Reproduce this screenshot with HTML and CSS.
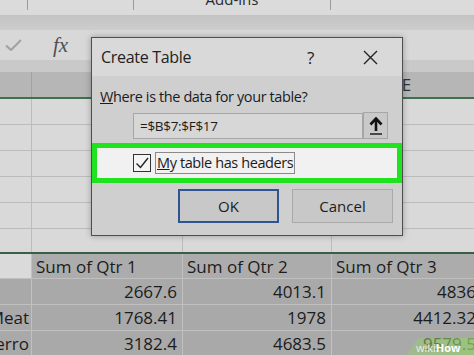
FILE: index.html
```html
<!DOCTYPE html>
<html lang="en">
  <head>
    <meta charset="UTF-8" />
    <meta name="viewport" content="width=device-width, initial-scale=1.0" />
    <title>Create Table</title>
    <link rel="stylesheet" href="styles.css">
  </head>
  <body>
    <div class="sheet">
      <div class="ribbon">
        <div class="tab tab-a"></div>
        <div class="tab tab-b"></div>
        <div class="tab tab-c"><span>Add-ins</span></div>
        <div class="tab tab-d"></div>
      </div>
      <div class="ribbon-shade"></div>
      <div class="formula-bar">
        <svg class="fb-check" width="17" height="12" viewBox="0 0 17 12">
          <path d="M1 6.5 L6 11 L16 1" fill="none" stroke="#a3a3a3" stroke-width="2.2" />
        </svg>
        <span class="fb-fx">fx</span>
      </div>
      <div class="strip"></div>
      <div class="col-headers">
        <div class="colh"></div>
        <div class="colh"></div>
        <div class="colh"></div>
        <div class="colh">E</div>
      </div>

      <div class="cells">
        <div class="row"><div></div><div></div><div></div><div></div></div>
        <div class="row"><div></div><div></div><div></div><div></div></div>
        <div class="row"><div></div><div></div><div></div><div></div></div>
        <div class="row"><div></div><div></div><div></div><div></div></div>
        <div class="row"><div></div><div></div><div></div><div></div></div>
        <div class="row row-last"><div></div><div></div><div></div><div></div></div>
      </div>

      <div class="pivot">
        <div class="prow prow-head">
          <div class="pcell pcell-blank"></div>
          <div class="pcell">Sum of Qtr 1</div>
          <div class="pcell">Sum of Qtr 2</div>
          <div class="pcell">Sum of Qtr 3</div>
        </div>
        <div class="prow">
          <div class="pcell label"></div>
          <div class="pcell num">2667.6</div>
          <div class="pcell num">4013.1</div>
          <div class="pcell num">4836</div>
        </div>
        <div class="prow">
          <div class="pcell label">Meat</div>
          <div class="pcell num">1768.41</div>
          <div class="pcell num">1978</div>
          <div class="pcell num">4412.32</div>
        </div>
        <div class="prow">
          <div class="pcell label">Ferro</div>
          <div class="pcell num">3182.4</div>
          <div class="pcell num">4683.5</div>
          <div class="pcell num">9579.5</div>
        </div>
      </div>
    </div>

    <div class="dialog">
      <div class="dialog-title">
        <span class="title-text">Create Table</span>
        <span class="title-help">?</span>
        <svg class="title-close" width="15" height="15" viewBox="0 0 15 15">
          <path d="M1 1 L14 14 M14 1 L1 14" stroke="#222" stroke-width="1.4" />
        </svg>
      </div>
      <div class="dialog-body">
        <div class="prompt"><u>W</u>here is the data for your table?</div>
        <div class="range">
          <div class="range-input">=$B$7:$F$17</div>
          <div class="range-btn">
            <svg width="14" height="18" viewBox="0 0 14 18">
              <path d="M7 2 V14" stroke="#111" stroke-width="2.6" />
              <path d="M1.5 7.5 L7 1.5 L12.5 7.5" fill="none" stroke="#111" stroke-width="2.6" />
              <path d="M1 17 H13" stroke="#111" stroke-width="1.4" />
            </svg>
          </div>
        </div>
        <div class="highlight">
          <div class="checkbox">
            <svg width="16" height="16" viewBox="0 0 16 16">
              <path d="M2.5 8.5 L6.5 12.5 L14 3" fill="none" stroke="#222" stroke-width="1.4" />
            </svg>
          </div>
          <div class="check-label"><u>M</u>y table has headers</div>
        </div>
        <div class="buttons">
          <div class="btn btn-ok">OK</div>
          <div class="btn">Cancel</div>
        </div>
      </div>
    </div>

    <div class="watermark">wiki<b>How</b></div>
  </body>
</html>
```

FILE: styles.css
```css
body {
  margin: 0;
  width: 474px;
  height: 355px;
  overflow: hidden;
  position: relative;
  font-family: "Open Sans", "Liberation Sans", sans-serif;
  background-color: #d6d6d6;
  color: #1c1c1c;
}

.sheet {
  width: 482px;
}

/* ribbon */
.ribbon {
  display: flex;
  height: 15px;
  background-color: #dbdbdb;
  overflow: hidden;
}

.tab {
  height: 10px;
  border-right: 1px solid #9a9a9a;
}

.tab-a {
  width: 27px;
}

.tab-b {
  width: 105px;
}

.tab-c {
  width: 196px;
  text-align: center;
  font-size: 15px;
  color: #2a2a2a;
}

.tab-c span {
  display: block;
  margin-top: -11px;
  line-height: 20px;
}

.tab-d {
  border-right: none;
}

.ribbon-shade {
  height: 15px;
  background: linear-gradient(#c3c3c3, #cdcdcd);
}

/* formula bar */
.formula-bar {
  display: flex;
  align-items: center;
  height: 30px;
  background-color: #d8d8d8;
}

.fb-check {
  margin-left: 5px;
}

.fb-fx {
  margin-left: 31px;
  font-family: "Liberation Serif", serif;
  font-style: italic;
  font-size: 21px;
  color: #505050;
}

.strip {
  height: 12px;
  background-color: #c9c9c9;
}

/* grid */
.col-headers,
.row,
.prow {
  display: grid;
  grid-template-columns: 32px 151px 149px 150px;
}

.col-headers {
  height: 25px;
  background-color: #b6b6b6;
  border-bottom: 2px solid #41704d;
}

.colh {
  border-right: 1px solid #a2a2a2;
  text-align: center;
  font-size: 17px;
  line-height: 25px;
  color: #333;
}

.row {
  height: 26px;
  box-sizing: border-box;
  border-bottom: 1px solid #bcbcbc;
  background-color: #d9d9d9;
}

.row div {
  border-right: 1px solid #bcbcbc;
}

.row-last {
  height: 23px;
  border-bottom: none;
}

.pivot {
  border-top: 2px solid #3b5f43;
}

.prow {
  height: 26px;
  box-sizing: border-box;
  border-bottom: 1px solid #c0c0c0;
  background-color: #a9a9a9;
}

.prow-head {
  height: 25px;
  background-color: #acacac;
}

.pcell {
  border-right: 1px solid #c0c0c0;
  padding: 0 4px;
  font-size: 17px;
  line-height: 25px;
  white-space: nowrap;
  overflow: hidden;
}

.pcell-blank {
  background-color: #dadada;
}

.num {
  text-align: right;
  padding-right: 5px;
}

.label {
  text-align: right;
  direction: rtl;
  padding: 0 2px 0 0;
}

/* dialog */
.dialog {
  position: absolute;
  left: 91px;
  top: 37px;
  width: 312px;
  height: 199px;
  box-sizing: border-box;
  border: 1px solid #4e4e4e;
  background-color: #cfcfcf;
  box-shadow: 0 0 6px rgba(0, 0, 0, 0.3);
}

.dialog-title {
  display: flex;
  align-items: center;
  height: 38px;
  padding-left: 9px;
  background-color: #d9d9d9;
  font-size: 16px;
  letter-spacing: -0.3px;
  color: #222;
}

.title-text {
  flex: 1;
}

.title-help {
  font-size: 17px;
  margin-right: 49px;
}

.title-close {
  margin-right: 24px;
}

.dialog-body {
  padding: 11px 9px 0 8px;
}

.prompt {
  font-size: 14.5px;
  letter-spacing: -0.4px;
  line-height: 20px;
}

.range {
  display: flex;
  margin: 6px 0 0 33px;
}

.range-input {
  width: 230px;
  height: 26px;
  box-sizing: border-box;
  border: 1px solid #a6a6a6;
  background-color: #d7d7d7;
  padding-left: 6px;
  font-size: 13.5px;
  letter-spacing: -0.3px;
  line-height: 24px;
}

.range-btn {
  width: 25px;
  height: 27px;
  margin-top: -1px;
  box-sizing: border-box;
  border: 1px solid #a6a6a6;
  background-color: #c9c9c9;
  display: flex;
  justify-content: center;
  align-items: center;
}

.highlight {
  display: flex;
  align-items: center;
  height: 40px;
  box-sizing: border-box;
  margin: 4px -9px 0 -8px;
  padding-left: 36px;
  border: 5px solid #1fe31f;
  background-color: #f1f1f1;
}

.checkbox {
  width: 18px;
  height: 18px;
  box-sizing: border-box;
  border: 1px solid #333;
  background-color: #f4f4f4;
}

.checkbox svg {
  display: block;
}

.check-label {
  margin-left: 4px;
  padding: 0 1px;
  border: 1px solid #8a8a8a;
  font-size: 14.5px;
  letter-spacing: -0.4px;
  line-height: 20px;
}

.buttons {
  display: flex;
  justify-content: flex-end;
  gap: 13px;
  margin-top: 6px;
}

.btn {
  width: 101px;
  height: 34px;
  box-sizing: border-box;
  border: 1px solid #a9a9a9;
  background-color: #c8c8c8;
  text-align: center;
  font-size: 15px;
  line-height: 32px;
}

.btn-ok {
  border: 2px solid #2e5590;
  line-height: 30px;
}

/* watermark */
.watermark {
  position: absolute;
  right: 0;
  bottom: 0;
  width: 58px;
  height: 17px;
  padding-left: 10px;
  background: linear-gradient(90deg, rgba(150, 205, 110, 0.4), rgba(150, 205, 110, 0.75));
  clip-path: polygon(18% 0, 100% 0, 100% 100%, 0 100%);
  font-size: 11px;
  line-height: 19px;
  color: rgba(255, 255, 255, 0.8);
}

.watermark b {
  color: #fff;
}
```
